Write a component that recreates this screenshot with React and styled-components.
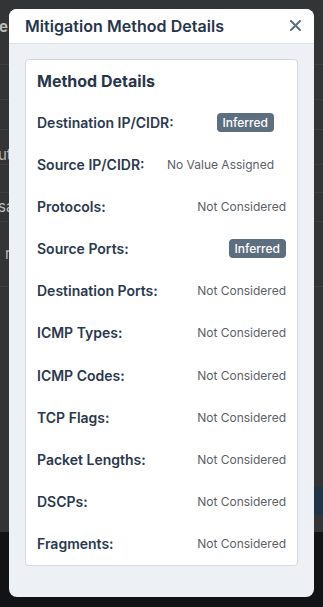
import React from "react";
import styled, { createGlobalStyle } from "styled-components";

const GlobalStyle = createGlobalStyle`
  html, body {
    margin: 0;
    padding: 0;
    background: #121314;
    font-family: "Inter", "Liberation Sans", sans-serif;
    -webkit-font-smoothing: antialiased;
  }
`;

const Backdrop = styled.div`
  width: 323px;
  height: 607px;
  display: flex;
  flex-direction: column;
  overflow: hidden;
`;

const DimPage = styled.div`
  height: 532px;
  background: #333436;
  display: flex;
  flex-direction: column;
`;

const DimRow = styled.div`
  height: ${(props) => props.h}px;
  border-bottom: 1px solid #3e3f41;
  box-sizing: border-box;
  display: flex;
  align-items: ${(props) => (props.top != null ? "flex-start" : "center")};
  padding-top: ${(props) => props.top || 0}px;
  padding-left: ${(props) => props.indent || 0}px;
  color: #b9babc;
  font-size: 15px;
  line-height: 18px;
  font-weight: ${(props) => (props.bold ? 700 : 400)};
`;

const DimText = styled.span`
  margin-left: -${(props) => props.shift || 0}px;
`;

const DimBlue = styled.div`
  margin-top: auto;
  margin-bottom: 17px;
  align-self: flex-end;
  width: 12px;
  height: 28px;
  background: #243447;
`;

const Dark = styled.div`
  flex: 1;
  background: #121314;
`;

const Modal = styled.div`
  position: fixed;
  top: 9px;
  left: 9px;
  width: 305px;
  height: 588px;
  border-radius: 8px;
  background: #edf1f5;
  overflow: hidden;
  display: flex;
  flex-direction: column;
`;

const Header = styled.div`
  height: 36px;
  background: #ffffff;
  border-bottom: 1px solid #dce1e6;
  display: flex;
  align-items: center;
  justify-content: space-between;
  padding: 0 13px 0 16px;
`;

const Title = styled.h2`
  margin: 0;
  font-size: 16px;
  font-weight: 600;
  color: #27364a;
  letter-spacing: 0.05px;
`;

const CloseButton = styled.button`
  border: 0;
  background: none;
  padding: 0;
  width: 11px;
  height: 11px;
  display: flex;
  cursor: pointer;
`;

const Body = styled.div`
  flex: 1;
  padding: 15px 16px 31px;
`;

const Card = styled.div`
  background: #ffffff;
  border: 1px solid #d3d8de;
  border-radius: 4px;
  padding: 0 11px;
`;

const CardTitle = styled.h3`
  margin: 0;
  padding: 10px 0 9px;
  line-height: 22px;
  font-size: 16px;
  font-weight: 700;
  color: #27364a;
`;

const Row = styled.div`
  height: 42.2px;
  display: flex;
  align-items: center;
  justify-content: space-between;
`;

const Label = styled.span`
  font-size: 14px;
  font-weight: 600;
  color: #2a394d;
`;

const Value = styled.span`
  font-size: 12px;
  color: #5c6168;
  margin-right: ${(props) => (props.inset ? 12 : 0)}px;
`;

const Badge = styled.span`
  font-size: 12px;
  font-weight: 500;
  line-height: 19px;
  padding: 0 6px;
  border-radius: 4px;
  background: #5d6e7f;
  color: #ffffff;
  margin-right: ${(props) => (props.inset ? 12 : 0)}px;
`;

const details = [
  { label: "Destination IP/CIDR:", value: "Inferred", badge: true, inset: true },
  { label: "Source IP/CIDR:", value: "No Value Assigned", inset: true },
  { label: "Protocols:", value: "Not Considered" },
  { label: "Source Ports:", value: "Inferred", badge: true },
  { label: "Destination Ports:", value: "Not Considered" },
  { label: "ICMP Types:", value: "Not Considered" },
  { label: "ICMP Codes:", value: "Not Considered" },
  { label: "TCP Flags:", value: "Not Considered" },
  { label: "Packet Lengths:", value: "Not Considered" },
  { label: "DSCPs:", value: "Not Considered" },
  { label: "Fragments:", value: "Not Considered" },
];

// faint page rows showing through the overlay
const bgRows = [
  { h: 65, text: "e", shift: 1, bold: true, top: 18 },
  { h: 35 },
  { h: 30 },
  { h: 35, text: "ut", shift: 2, top: 16 },
  { h: 28 },
  { h: 29, text: "sa", shift: 2 },
  { h: 65, text: "r", indent: 5 },
];

export default function App() {
  return (
    <>
      <GlobalStyle />
      <Backdrop>
        <DimPage>
          {bgRows.map((r, i) => (
            <DimRow key={i} h={r.h} bold={r.bold} indent={r.indent} top={r.top}>
              <DimText shift={r.shift}>{r.text}</DimText>
            </DimRow>
          ))}
          <DimBlue />
        </DimPage>
        <Dark />
      </Backdrop>
      <Modal>
        <Header>
          <Title>Mitigation Method Details</Title>
          <CloseButton aria-label="Close">
            <svg width="11" height="11" viewBox="0 0 11 11">
              <path
                d="M1 1L10 10M10 1L1 10"
                stroke="#5e6f7f"
                strokeWidth="2"
                strokeLinecap="round"
              />
            </svg>
          </CloseButton>
        </Header>
        <Body>
          <Card>
            <CardTitle>Method Details</CardTitle>
            {details.map((d) => (
              <Row key={d.label}>
                <Label>{d.label}</Label>
                {d.badge ? (
                  <Badge inset={d.inset}>{d.value}</Badge>
                ) : (
                  <Value inset={d.inset}>{d.value}</Value>
                )}
              </Row>
            ))}
          </Card>
        </Body>
      </Modal>
    </>
  );
}
